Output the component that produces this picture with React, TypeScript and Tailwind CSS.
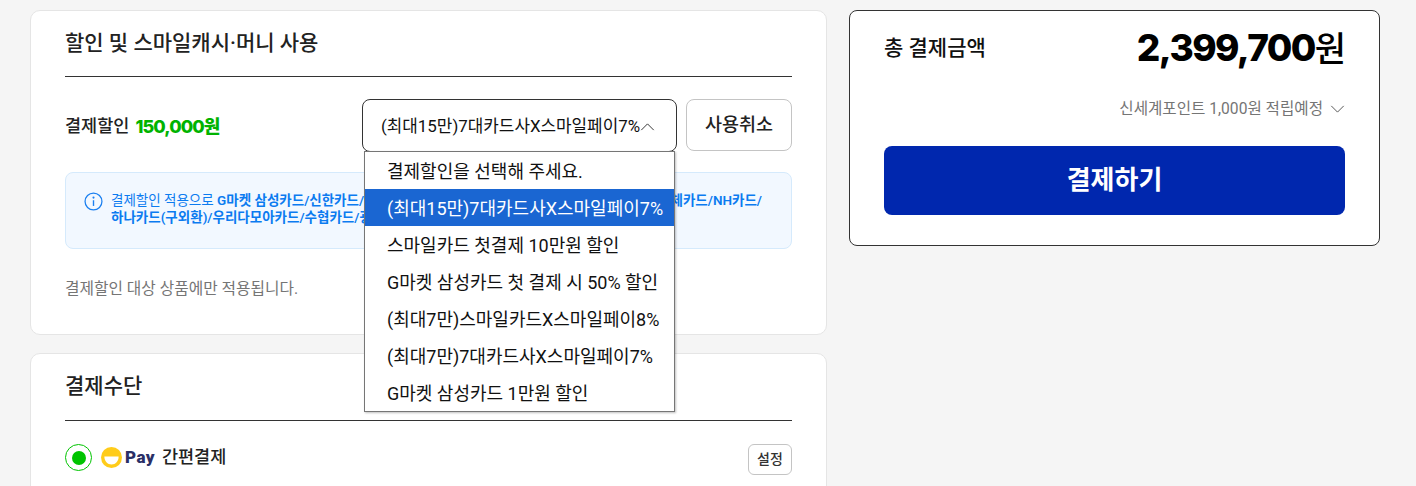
import React from 'react';

const options = [
  '결제할인을 선택해 주세요.',
  '(최대15만)7대카드사X스마일페이7%',
  '스마일카드 첫결제 10만원 할인',
  'G마켓 삼성카드 첫 결제 시 50% 할인',
  '(최대7만)스마일카드X스마일페이8%',
  '(최대7만)7대카드사X스마일페이7%',
  'G마켓 삼성카드 1만원 할인',
];

const font = "font-['Roboto','Noto_Sans_CJK_KR',sans-serif]";

function Chevron({ up, className }: { up?: boolean; className?: string }) {
  return (
    <svg viewBox="0 0 16 9" fill="none" className={className}>
      <path d={up ? 'M1 8L8 1L15 8' : 'M1 1L8 8L15 1'} stroke="currentColor" strokeWidth="1.1" />
    </svg>
  );
}

export default function App() {
  return (
    <div className={`${font} h-[486px] w-[1416px] overflow-hidden bg-[#f5f5f5] pl-[30px] pt-[10px] flex items-start gap-[22px] text-[#222]`}>
      <div className="w-[797px] flex flex-col gap-[18px]">
        {/* discount card */}
        <section className="h-[325px] rounded-[10px] border border-[#e5e5e5] bg-white px-[34px]">
          <h2 className="h-[66px] border-b border-[#333] pt-[16px] text-[21px] leading-[32px] font-medium text-[#222]">
            할인 및 스마일캐시·머니 사용
          </h2>
          <div className="mt-[22px] flex items-center h-[52px]">
            <div className="flex items-center w-[297px] pt-[2px] text-[17.5px] font-medium">
              결제할인
              <span className="ml-[6px] text-[18px] font-extrabold tracking-[-0.9px] text-[#00b300] font-['Inter','Noto_Sans_CJK_KR',sans-serif]">150,000원</span>
            </div>
            <div className="relative w-[315px]">
              <div className="flex h-[53px] w-full items-center justify-between rounded-[8px] border border-[#333] bg-white pl-[18px] pr-[21px] pt-[3px] text-[16.9px] text-[#111] whitespace-nowrap">
                <span>(최대15만)7대카드사X스마일페이7%</span>
                <Chevron up className="h-[8px] w-[15px] shrink-0 text-[#333]" />
              </div>
              <ul className="absolute left-[2px] top-[52px] z-10 w-[311px] border border-[#767676] bg-white shadow-[1px_1px_2px_rgba(0,0,0,0.25)] text-[18px] text-[#111]">
                {options.map((o, i) => (
                  <li
                    key={o}
                    className={`h-[37px] pl-[22px] pt-[2px] leading-[35px] whitespace-nowrap ${i === 1 ? 'bg-[#1a66d2] text-white' : ''}`}
                  >
                    {o}
                  </li>
                ))}
              </ul>
            </div>
            <button className="ml-[9px] h-[52px] w-[106px] rounded-[8px] border border-[#c4c4c4] bg-white pt-[1px] text-[18.5px] font-medium text-[#222]">
              사용취소
            </button>
          </div>
          <div className="mt-[21px] flex h-[77px] gap-[8px] rounded-[8px] border border-[#d5eafc] bg-[#f2f8ff] pl-[18px] pr-[20px] pt-[19px] text-[13.5px] leading-[17px] text-[#0b7bf0] whitespace-nowrap">
            <svg viewBox="0 0 18 18" fill="none" className="h-[19px] w-[19px] shrink-0">
              <circle cx="9" cy="9" r="8" stroke="#1a7ff0" strokeWidth="1.2" />
              <circle cx="9" cy="5.3" r="1" fill="#1a7ff0" />
              <path d="M9 7.8V13.2" stroke="#1a7ff0" strokeWidth="1.3" />
            </svg>
            <p className="w-[651px]">
              <span className="flex justify-between">
                <span>결제할인 적용으로 <b className="font-semibold">G마켓 삼성카드/신한카드/</b></span>
                <b className="font-semibold">체카드/NH카드/</b>
              </span>
              <b className="font-semibold">하나카드(구외환)/우리다모아카드/수협카드/광주</b>
            </p>
          </div>
          <p className="mt-[30px] text-[15.75px] leading-[20px] text-[#757575]">결제할인 대상 상품에만 적용됩니다.</p>
        </section>

        {/* payment method card */}
        <section className="h-[200px] rounded-[10px] border border-[#e5e5e5] bg-white px-[34px]">
          <h2 className="h-[67px] border-b border-[#333] pt-[16px] text-[21px] leading-[32px] font-medium text-[#222]">결제수단</h2>
          <div className="mt-[23px] flex items-start justify-between">
            <div className="flex items-center">
              <span className="flex h-[27px] w-[27px] items-center justify-center rounded-full border border-[#00c400]">
                <span className="h-[14px] w-[14px] rounded-full bg-[#00c400]" />
              </span>
              <svg viewBox="0 0 20 20" className="ml-[9px] h-[21px] w-[21px]">
                <circle cx="10" cy="10" r="10" fill="#ffcc1a" />
                <path d="M3.2 9H16.8C16.8 13.4 13.8 16.6 10 16.6C6.2 16.6 3.2 13.4 3.2 9Z" fill="#fff" />
              </svg>
              <span className="ml-[3px] text-[17px] font-black text-[#2a2f66] tracking-[0.4px]">Pay</span>
              <span className="ml-[7px] text-[17.5px] font-medium text-[#222]">간편결제</span>
            </div>
            <button className="h-[31px] w-[44px] rounded-[6px] border border-[#c4c4c4] bg-white text-[14px] font-medium text-[#333]">설정</button>
          </div>
        </section>
      </div>

      {/* total card */}
      <aside className="h-[236px] w-[531px] rounded-[8px] border border-[#333] bg-white px-[34px]">
        <div className="flex items-center justify-between pt-[13px]">
          <span className="text-[21px] font-medium text-[#111]">총 결제금액</span>
          <span className="mr-[-1px] text-[37px] leading-[48px] font-extrabold tracking-[-1.6px] text-black font-['Inter','Noto_Sans_CJK_KR',sans-serif]">
            2,399,700<span className="font-medium text-[34px] tracking-normal">원</span>
          </span>
        </div>
        <div className="mt-[24px] flex items-center justify-end gap-[7px] text-[15.6px] leading-[24px] text-[#757575]">
          신세계포인트 1,000원 적립예정
          <Chevron className="h-[8px] w-[15px] text-[#555]" />
        </div>
        <button className="mt-[25px] h-[69px] w-full rounded-[8px] bg-[#0027ae] text-[26px] font-semibold text-white">결제하기</button>
      </aside>
    </div>
  );
}
